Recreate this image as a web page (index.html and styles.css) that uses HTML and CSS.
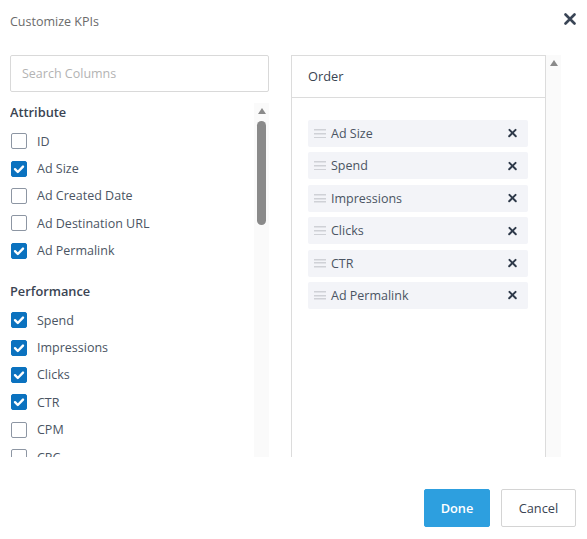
FILE: index.html
```html
<!DOCTYPE html>
<html lang="en">
<head>
<meta charset="utf-8">
<title>Customize KPIs</title>
<link rel="stylesheet" href="styles.css">
</head>
<body>
<div class="dialog">
  <header class="dialog-head">
    <h1 class="dialog-title">Customize KPIs</h1>
    <button class="close-btn" aria-label="Close">
      <svg width="12" height="12" viewBox="0 0 12 12"><path d="M1.5 1.5 L10.5 10.5 M10.5 1.5 L1.5 10.5" stroke="#3a4556" stroke-width="2.6" stroke-linecap="round"/></svg>
    </button>
  </header>

  <div class="dialog-body">
    <div class="columns-pane">
      <input class="search" type="text" placeholder="Search Columns">
      <div class="list-wrap">
        <div class="list">
          <div class="group">
            <div class="group-title">Attribute</div>
            <label class="opt"><span class="box"></span>ID</label>
            <label class="opt"><span class="box on"><svg viewBox="0 0 16 16"><path d="M4 8.2 L6.8 11 L12 5.6" fill="none" stroke="#fff" stroke-width="2.4" stroke-linecap="round" stroke-linejoin="round"/></svg></span>Ad Size</label>
            <label class="opt"><span class="box"></span>Ad Created Date</label>
            <label class="opt"><span class="box"></span>Ad Destination URL</label>
            <label class="opt"><span class="box on"><svg viewBox="0 0 16 16"><path d="M4 8.2 L6.8 11 L12 5.6" fill="none" stroke="#fff" stroke-width="2.4" stroke-linecap="round" stroke-linejoin="round"/></svg></span>Ad Permalink</label>
          </div>
          <div class="group">
            <div class="group-title">Performance</div>
            <label class="opt"><span class="box on"><svg viewBox="0 0 16 16"><path d="M4 8.2 L6.8 11 L12 5.6" fill="none" stroke="#fff" stroke-width="2.4" stroke-linecap="round" stroke-linejoin="round"/></svg></span>Spend</label>
            <label class="opt"><span class="box on"><svg viewBox="0 0 16 16"><path d="M4 8.2 L6.8 11 L12 5.6" fill="none" stroke="#fff" stroke-width="2.4" stroke-linecap="round" stroke-linejoin="round"/></svg></span>Impressions</label>
            <label class="opt"><span class="box on"><svg viewBox="0 0 16 16"><path d="M4 8.2 L6.8 11 L12 5.6" fill="none" stroke="#fff" stroke-width="2.4" stroke-linecap="round" stroke-linejoin="round"/></svg></span>Clicks</label>
            <label class="opt"><span class="box on"><svg viewBox="0 0 16 16"><path d="M4 8.2 L6.8 11 L12 5.6" fill="none" stroke="#fff" stroke-width="2.4" stroke-linecap="round" stroke-linejoin="round"/></svg></span>CTR</label>
            <label class="opt"><span class="box"></span>CPM</label>
            <label class="opt"><span class="box"></span>CPC</label>
          </div>
        </div>
        <div class="scrollbar">
          <span class="arrow-up"></span>
          <span class="thumb"></span>
        </div>
      </div>
    </div>

    <div class="order-pane">
      <div class="order-panel">
        <div class="order-head">Order</div>
        <ul class="order-list">
          <li class="order-item"><span class="handle"></span><span class="order-name">Ad Size</span><span class="remove"></span></li>
          <li class="order-item"><span class="handle"></span><span class="order-name">Spend</span><span class="remove"></span></li>
          <li class="order-item"><span class="handle"></span><span class="order-name">Impressions</span><span class="remove"></span></li>
          <li class="order-item"><span class="handle"></span><span class="order-name">Clicks</span><span class="remove"></span></li>
          <li class="order-item"><span class="handle"></span><span class="order-name">CTR</span><span class="remove"></span></li>
          <li class="order-item"><span class="handle"></span><span class="order-name">Ad Permalink</span><span class="remove"></span></li>
        </ul>
      </div>
      <div class="scrollbar tall">
        <span class="arrow-up"></span>
      </div>
    </div>
  </div>

  <footer class="dialog-foot">
    <button class="btn primary">Done</button>
    <button class="btn secondary">Cancel</button>
  </footer>
</div>
</body>
</html>
```
FILE: styles.css
```css
* { box-sizing: border-box; }

html, body {
  margin: 0;
  background: #fff;
}

body {
  font-family: "Open Sans", "Liberation Sans", sans-serif;
  font-size: 12.5px;
  color: #4b5563;
  width: 587px;
  height: 539px;
  overflow: hidden;
}

.dialog {
  padding: 0 11px 0 10px;
}

/* header */
.dialog-head {
  height: 44px;
  display: flex;
  align-items: flex-start;
  justify-content: space-between;
}

.dialog-title {
  margin: 12px 0 0;
  font-size: 12.5px;
  font-weight: 400;
  line-height: 20px;
  color: #6b6b6b;
}

.close-btn {
  margin-top: 13px;
  padding: 0;
  border: 0;
  background: none;
  width: 12px;
  height: 12px;
  display: flex;
}

/* body */
.dialog-body {
  margin-top: 11px;
  height: 402px;
  display: flex;
  gap: 22px;
  overflow: hidden;
}

.columns-pane {
  width: 259px;
  display: flex;
  flex-direction: column;
}

.search {
  height: 37px;
  width: 100%;
  border: 1px solid #d9d9d9;
  border-radius: 2px;
  padding: 0 11px;
  font-family: inherit;
  font-size: 12.5px;
  color: #333;
  outline: none;
}
.search::placeholder { color: #b3b3b3; }

.list-wrap {
  margin-top: 11px;
  flex: 1;
  display: flex;
  overflow: hidden;
}

.list {
  flex: 1;
  overflow: hidden;
  margin-top: -1px;
}

.group + .group { margin-top: 16.5px; }

.group-title {
  height: 20px;
  line-height: 20px;
  margin-bottom: 5.5px;
  font-weight: 600;
  color: #3a4452;
  font-size: 12.8px;
}

.opt {
  height: 27.4px;
  display: flex;
  align-items: center;
  gap: 10px;
  padding-left: 1px;
  color: #4b5563;
}

.box {
  width: 16px;
  height: 16px;
  border: 1px solid #8d96a3;
  border-radius: 2px;
  background: #fff;
  flex: none;
  display: flex;
}
.box.on {
  background: #0b72bf;
  border-color: #0b72bf;
}
.box svg {
  margin: -1px;
  width: 16px;
  height: 16px;
}

/* custom scroll track */
.scrollbar {
  width: 15px;
  flex: none;
  background: #fafafa;
  display: flex;
  flex-direction: column;
  align-items: center;
}

.arrow-up {
  margin-top: 5px;
  width: 0;
  height: 0;
  border-left: 4.5px solid transparent;
  border-right: 4.5px solid transparent;
  border-bottom: 6px solid #8a8a8a;
}

.thumb {
  margin-top: 7px;
  width: 9px;
  height: 104px;
  border-radius: 4.5px;
  background: #8a8a8a;
}

/* order column */
.order-pane {
  display: flex;
}

.order-panel {
  width: 255px;
  border: 1px solid #dcdcdc;
  border-bottom: 0;
}

.order-head {
  height: 42px;
  border-bottom: 1px solid #dcdcdc;
  padding: 0 0 1px 16px;
  display: flex;
  align-items: center;
  color: #3a4452;
  font-size: 12.8px;
}

.order-list {
  list-style: none;
  margin: 0;
  padding: 22px 0 0 16px;
}

.order-item {
  width: 220px;
  height: 27px;
  margin-bottom: 5.4px;
  background: #f3f4f8;
  border-radius: 2px;
  display: flex;
  align-items: center;
  padding: 0 11px 0 6px;
  color: #4b5563;
}

.handle {
  width: 12px;
  height: 9px;
  margin-right: 5px;
  flex: none;
  background:
    linear-gradient(#cfd1d6, #cfd1d6) 0 0 / 100% 1.5px no-repeat,
    linear-gradient(#cfd1d6, #cfd1d6) 0 3.75px / 100% 1.5px no-repeat,
    linear-gradient(#cfd1d6, #cfd1d6) 0 7.5px / 100% 1.5px no-repeat;
}

.order-name { flex: 1; }

.remove {
  width: 9px;
  height: 9px;
  position: relative;
  flex: none;
}
.remove::before,
.remove::after {
  content: "";
  position: absolute;
  left: -1px;
  top: 3.4px;
  width: 11px;
  height: 2.4px;
  border-radius: 1px;
  background: #2f3a4a;
  transform: rotate(45deg);
}
.remove::after { transform: rotate(-45deg); }

.tall .arrow-up { margin-top: 5px; }

/* footer */
.dialog-foot {
  margin-top: 32px;
  display: flex;
  justify-content: flex-end;
  gap: 11px;
}

.btn {
  height: 38px;
  font-family: inherit;
  font-size: 12.8px;
  border-radius: 2px;
  cursor: pointer;
}

.btn.primary {
  width: 66px;
  background: #2d9fdf;
  border: 1px solid #2d9fdf;
  color: #fff;
  font-weight: 600;
}

.btn.secondary {
  width: 75px;
  background: #fff;
  border: 1px solid #d4d4d4;
  color: #3a4452;
}
```
